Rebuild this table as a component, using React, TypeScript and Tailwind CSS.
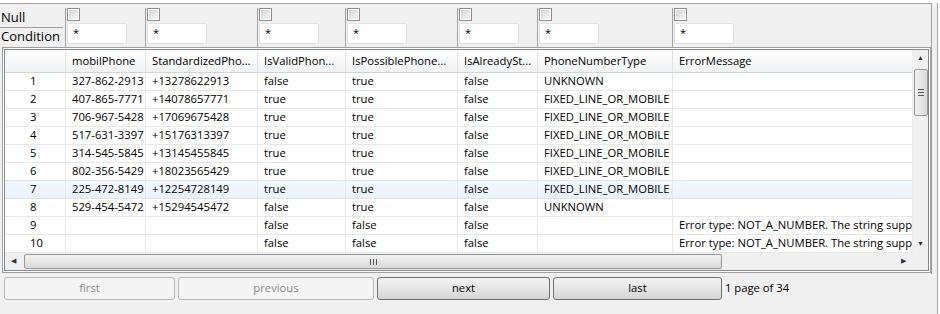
const cols = [
  { key: 'num', title: '', w: 'w-[61px]' },
  { key: 'mobil', title: 'mobilPhone', w: 'w-[80px]' },
  { key: 'std', title: 'StandardizedPho...', w: 'w-[112px]' },
  { key: 'valid', title: 'IsValidPhon...', w: 'w-[88px]' },
  { key: 'possible', title: 'IsPossiblePhone...', w: 'w-[112px]' },
  { key: 'already', title: 'IsAlreadySt...', w: 'w-[80px]' },
  { key: 'type', title: 'PhoneNumberType', w: 'w-[135px]' },
  { key: 'error', title: 'ErrorMessage', w: 'w-[240px]' },
];

const filterCols = ['w-[80px]', 'w-[112px]', 'w-[88px]', 'w-[112px]', 'w-[80px]', 'w-[135px]', 'flex-1'];

const ERR = 'Error type: NOT_A_NUMBER. The string supplied did not seem to be a phone number.';
const FIXED = 'FIXED_LINE_OR_MOBILE';

const rows = [
  ['1', '327-862-2913', '+13278622913', 'false', 'true', 'false', 'UNKNOWN', ''],
  ['2', '407-865-7771', '+14078657771', 'true', 'true', 'false', FIXED, ''],
  ['3', '706-967-5428', '+17069675428', 'true', 'true', 'false', FIXED, ''],
  ['4', '517-631-3397', '+15176313397', 'true', 'true', 'false', FIXED, ''],
  ['5', '314-545-5845', '+13145455845', 'true', 'true', 'false', FIXED, ''],
  ['6', '802-356-5429', '+18023565429', 'true', 'true', 'false', FIXED, ''],
  ['7', '225-472-8149', '+12254728149', 'true', 'true', 'false', FIXED, ''],
  ['8', '529-454-5472', '+15294545472', 'false', 'true', 'false', 'UNKNOWN', ''],
  ['9', '', '', 'false', 'false', 'false', '', ERR],
  ['10', '', '', 'false', 'false', 'false', '', ERR],
];

const Checkbox = () => (
  <div className="w-[13px] h-[13px] border border-[#8f8f8f] bg-white p-[1px]">
    <div className="w-full h-full bg-gradient-to-br from-[#d2d4d7] to-[#f7f7f7]" />
  </div>
);

const Button = ({ label, w, disabled }: { label: string; w: string; disabled?: boolean }) => (
  <div
    className={
      disabled
        ? `${w} h-[23px] flex items-center justify-center rounded-[3px] border border-[#b9b9b9] bg-[#f4f4f4] text-[#8a8a8a]`
        : `${w} h-[23px] flex items-center justify-center rounded-[3px] border border-[#707070] bg-gradient-to-b from-[#f2f2f2] via-[#e6e6e6] to-[#d4d4d4] text-black`
    }
  >
    {label}
  </div>
);

export default function App() {
  return (
    <div
      className="w-[938px] h-[313px] bg-[#f0f0f0] border-r border-b border-[#a0a0a0] text-[11.25px] text-black"
      style={{ fontFamily: '"Open Sans", "Noto Sans", sans-serif' }}
    >
      <div className="mt-[3px] w-[932px] border-t border-r border-[#a0a0a0] pb-[1px]">
        {/* filter row */}
        <div className="flex h-[43px] pt-[4px]">
          <div className="w-[66px] border-r border-[#a0a0a0] flex flex-col leading-none text-[13px]">
            <div className="h-[20px] border-b border-[#a0a0a0] flex items-end pl-[1px] pb-[3px] mr-[2px]">Null</div>
            <div className="h-[17px] flex items-center pl-[1px]">Condition</div>
          </div>
          {filterCols.map((w, i) => (
            <div key={i} className={`${w} ${i < filterCols.length - 1 ? 'border-r border-[#a0a0a0]' : ''} pl-[1px] flex flex-col gap-[2px]`}>
              <Checkbox />
              <div className="w-[60px] h-[21px] bg-white border border-[#dfe2e5] rounded-[2px] pl-[5px] flex items-center text-[11px]">*</div>
            </div>
          ))}
        </div>

        {/* table */}
        <div className="ml-[2px] w-[929px] border border-[#a0a0a0] p-[1px] bg-white">
          <div className="border border-[#828790] flex flex-col">
            <div className="flex h-[203px]">
              <div className="w-[908px] overflow-hidden">
                <div className="flex h-[23px] bg-gradient-to-b from-white to-[#f1f2f4] border-b border-[#d5d5d5]">
                  {cols.map((c) => (
                    <div key={c.key} className={`${c.w} shrink-0 border-r border-[#e3e3e3] pl-[6px] flex items-center whitespace-nowrap overflow-hidden`}>
                      {c.title}
                    </div>
                  ))}
                </div>
                {rows.map((r, ri) => (
                  <div
                    key={ri}
                    className={
                      ri === 6
                        ? 'flex h-[18px] bg-gradient-to-b from-[#f3f8fe] to-[#e9f2fc] border-b border-[#d6e4f4]'
                        : ri === 5
                          ? 'flex h-[18px] border-b border-[#d6e4f4]'
                          : 'flex h-[18px] border-b border-[#e8e8e8]'
                    }
                  >
                    {r.map((v, ci) => (
                      <div
                        key={ci}
                        className={`${cols[ci].w} shrink-0 ${ci < 7 ? 'border-r border-[#e8e8e8]' : ''} ${ci === 0 ? 'pl-[25px]' : 'pl-[6px]'} flex items-center whitespace-nowrap overflow-hidden`}
                      >
                        {v}
                      </div>
                    ))}
                  </div>
                ))}
              </div>
              {/* vertical scrollbar */}
              <div className="w-[16px] bg-[#f0f0f0] flex flex-col items-center border-l border-[#ececec]">
                <div className="h-[17px] flex items-center justify-center text-[7px] text-[#333]">▲</div>
                <div className="w-[14px] h-[47px] mt-[2px] rounded-[2px] border border-[#979797] bg-gradient-to-r from-[#f1f1f1] to-[#d9d9d9] flex flex-col items-center justify-center gap-[2px]">
                  <div className="w-[6px] h-px bg-[#555]" />
                  <div className="w-[6px] h-px bg-[#555]" />
                  <div className="w-[6px] h-px bg-[#555]" />
                </div>
                <div className="flex-1" />
                <div className="h-[17px] flex items-center justify-center text-[7px] text-[#333]">▼</div>
              </div>
            </div>
            {/* horizontal scrollbar */}
            <div className="flex h-[17px]">
              <div className="w-[908px] bg-[#f0f0f0] flex items-center">
                <div className="w-[17px] flex items-center justify-center text-[7px] text-[#333]">◀</div>
                <div className="ml-[2px] w-[698px] h-[15px] rounded-[2px] border border-[#979797] bg-gradient-to-b from-[#f1f1f1] to-[#d9d9d9] flex items-center justify-center gap-[2px]">
                  <div className="w-px h-[6px] bg-[#555]" />
                  <div className="w-px h-[6px] bg-[#555]" />
                  <div className="w-px h-[6px] bg-[#555]" />
                </div>
                <div className="flex-1" />
                <div className="w-[17px] flex items-center justify-center text-[7px] text-[#333]">▶</div>
              </div>
              <div className="w-[16px] bg-[#f0f0f0]" />
            </div>
          </div>
        </div>
      </div>

      {/* pager */}
      <div className="flex items-center gap-[3px] mt-[3px] pl-[4px]">
        <Button label="first" w="w-[171px]" disabled />
        <Button label="previous" w="w-[196px]" disabled />
        <Button label="next" w="w-[173px]" />
        <Button label="last" w="w-[169px]" />
        <span>1 page of 34</span>
      </div>
    </div>
  );
}
